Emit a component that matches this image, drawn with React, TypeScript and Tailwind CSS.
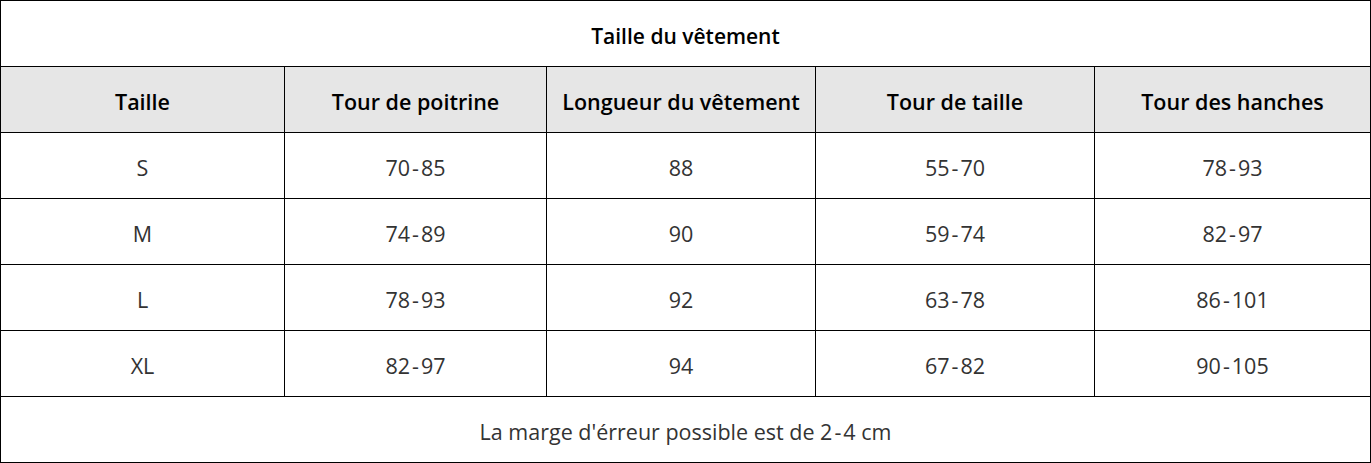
const cols = ["w-[284px]", "w-[262px]", "w-[269px]", "w-[279px]", "w-[276px]"]

const headers = ["Taille", "Tour de poitrine", "Longueur du vêtement", "Tour de taille", "Tour des hanches"]

const rows = [
  ["S", "70-85", "88", "55-70", "78-93"],
  ["M", "74-89", "90", "59-74", "82-97"],
  ["L", "78-93", "92", "63-78", "86-101"],
  ["XL", "82-97", "94", "67-82", "90-105"],
]

// ranges get a little air round the dash, like the source chart
function Range({ value }: { value: string }) {
  const parts = value.split("-")
  if (parts.length < 2) return <>{value}</>
  return (
    <>
      {parts[0]}
      <span className="px-[2px]">-</span>
      {parts[1]}
    </>
  )
}

export default function App() {
  return (
    <div className="w-[1371px] bg-white font-['Open_Sans',sans-serif] text-[21.5px] text-[#333]">
      <div className="border-l border-t border-black">
        <div className="flex h-[66px] items-center justify-center border-b border-r border-black pt-[6px] text-[21px] font-semibold text-black">
          Taille du vêtement
        </div>
        <div className="flex bg-[#e6e6e6] text-[21.5px] font-semibold text-black">
          {headers.map((h, i) => (
            <div key={h} className={`${cols[i]} flex h-[66px] items-center justify-center border-b border-r border-black pt-[6px]`}>
              {h}
            </div>
          ))}
        </div>
        {rows.map((r) => (
          <div key={r[0]} className="flex">
            {r.map((c, i) => (
              <div key={i} className={`${cols[i]} flex h-[66px] items-center justify-center border-b border-r border-black pt-[6px]`}>
                <Range value={c} />
              </div>
            ))}
          </div>
        ))}
        <div className="flex h-[66px] items-center justify-center border-b border-r border-black pt-[6px]">
          La marge d'érreur possible est de 2<span className="px-[2px]">-</span>4 cm
        </div>
      </div>
    </div>
  )
}
